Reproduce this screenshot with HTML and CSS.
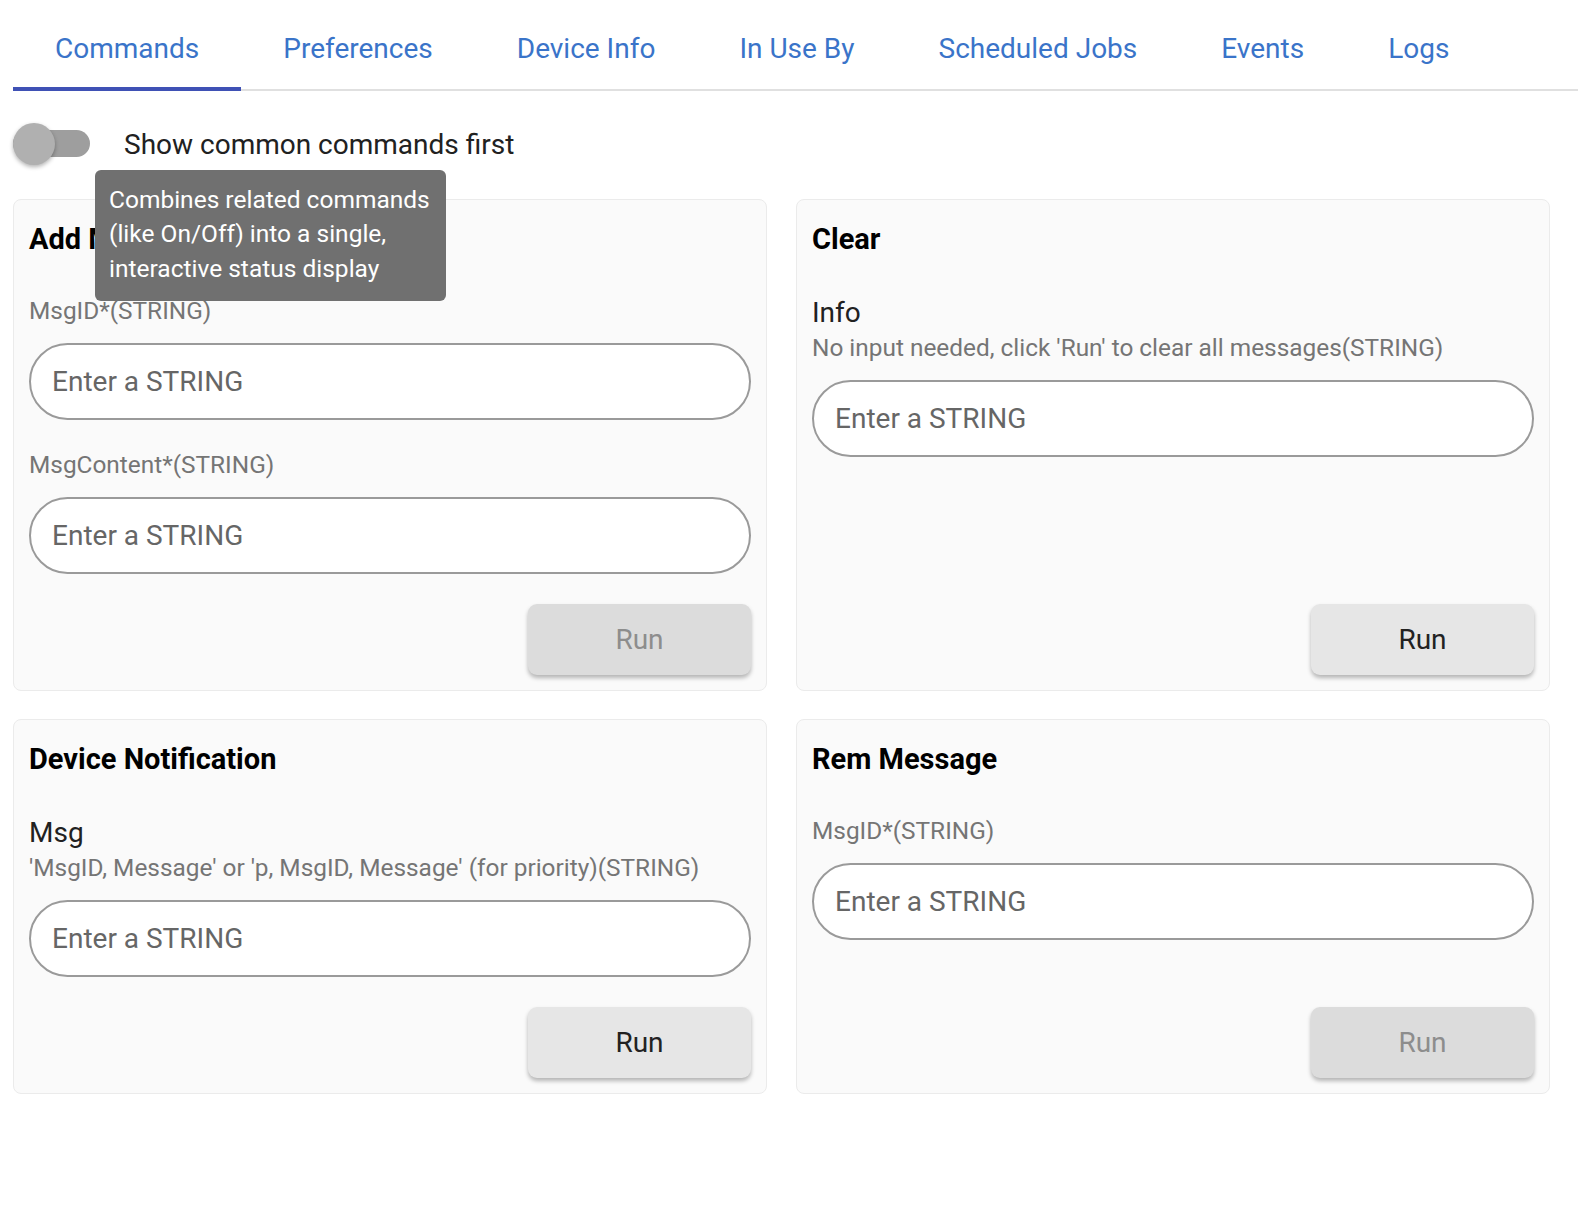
FILE: index.html
```html
<!DOCTYPE html>
<html>
<head>
<meta charset="utf-8">
<link rel="stylesheet" href="styles.css">
</head>
<body>
<div class="page">
  <nav class="tabs">
    <div class="tab active">Commands</div>
    <div class="tab">Preferences</div>
    <div class="tab">Device Info</div>
    <div class="tab">In Use By</div>
    <div class="tab">Scheduled Jobs</div>
    <div class="tab">Events</div>
    <div class="tab">Logs</div>
    <div class="tab-fill"></div>
  </nav>

  <div class="toggle-row">
    <div class="switch"><div class="track"></div><div class="thumb"></div></div>
    <span class="toggle-label">Show common commands first</span>
    <div class="tooltip">Combines related commands (like On/Off) into a single, interactive status display</div>
  </div>

  <div class="grid">
    <section class="card">
      <h3 class="card-title">Add Message</h3>
      <div class="field first">
        <div class="field-desc">MsgID*(STRING)</div>
        <div class="input">Enter a STRING</div>
      </div>
      <div class="field">
        <div class="field-desc">MsgContent*(STRING)</div>
        <div class="input">Enter a STRING</div>
      </div>
      <div class="actions"><button class="run disabled">Run</button></div>
    </section>

    <section class="card">
      <h3 class="card-title">Clear</h3>
      <div class="field first">
        <div class="field-name">Info</div>
        <div class="field-desc">No input needed, click 'Run' to clear all messages(STRING)</div>
        <div class="input">Enter a STRING</div>
      </div>
      <div class="actions"><button class="run">Run</button></div>
    </section>

    <section class="card">
      <h3 class="card-title">Device Notification</h3>
      <div class="field first">
        <div class="field-name">Msg</div>
        <div class="field-desc">'MsgID, Message' or 'p, MsgID, Message' (for priority)(STRING)</div>
        <div class="input">Enter a STRING</div>
      </div>
      <div class="actions"><button class="run">Run</button></div>
    </section>

    <section class="card">
      <h3 class="card-title">Rem Message</h3>
      <div class="field first">
        <div class="field-desc">MsgID*(STRING)</div>
        <div class="input">Enter a STRING</div>
      </div>
      <div class="actions"><button class="run disabled">Run</button></div>
    </section>
  </div>
</div>
</body>
</html>
```

FILE: styles.css
```css
* { box-sizing: border-box; }
html, body { margin: 0; padding: 0; background: #fff; }
body {
  font-family: Roboto, "Liberation Sans", Arial, sans-serif;
  color: #212121;
}
.page { padding: 0 0 0 13px; }

.tabs {
  display: flex;
  height: 91px;
}
.tab {
  padding: 8px 42px 0 42px;
  font-size: 28px;
  color: #3a74c9;
  display: flex;
  align-items: center;
  border-bottom: 2px solid #e0e0e0;
  position: relative;
}
.tab.active::after {
  content: "";
  position: absolute;
  left: 0; right: 0; bottom: -2px;
  height: 4px;
  background: #3f51b5;
}
.tab-fill { flex: 1; border-bottom: 2px solid #e0e0e0; }

.toggle-row {
  position: relative;
  display: flex;
  align-items: center;
  height: 108px;
  padding-bottom: 2px;
}
.switch {
  position: relative;
  width: 77px;
  height: 42px;
  margin-right: 34px;
}
.track {
  position: absolute;
  left: 0; right: 0; top: 7px;
  height: 27px;
  border-radius: 14px;
  background: #9e9e9e;
}
.thumb {
  position: absolute;
  left: 0; top: 0;
  width: 42px; height: 42px;
  border-radius: 50%;
  background: #b0b0b0;
  box-shadow: 0 2px 4px rgba(0,0,0,0.3);
}
.toggle-label { font-size: 28px; color: #212121; }
.tooltip {
  position: absolute;
  left: 82px;
  top: 79px;
  width: 351px;
  padding: 13px 14px 15px 14px;
  background: #707070;
  color: #fff;
  font-size: 24.5px;
  line-height: 34.3px;
  border-radius: 6px;
  z-index: 5;
}

.grid {
  display: grid;
  grid-template-columns: 754px 754px;
  column-gap: 29px;
  row-gap: 28px;
}
.card {
  background: #fafafa;
  border: 1px solid #ebebeb;
  border-radius: 8px;
  padding: 16px 15px 15px 15px;
  display: flex;
  flex-direction: column;
}
.card-title {
  margin: 0;
  font-size: 29px;
  font-weight: 700;
  line-height: 46px;
  color: #000;
}
.field { margin-top: 31px; }
.field.first { margin-top: 35px; }
.field-name {
  font-size: 28px;
  line-height: 32px;
  color: #212121;
}
.field-desc {
  font-size: 24.4px;
  line-height: 28px;
  color: #757575;
}
.field-name + .field-desc { margin-top: 5px; }
.input {
  margin-top: 18px;
  height: 77px;
  border: 2px solid #9a9a9a;
  border-radius: 39px;
  background: #fff;
  padding: 0 21px;
  display: flex;
  align-items: center;
  font-size: 28px;
  color: #666;
}
.actions {
  margin-top: auto;
  padding-top: 30px;
  display: flex;
  justify-content: flex-end;
}
.run {
  width: 223px;
  height: 71px;
  border: none;
  border-radius: 9px;
  background: #e6e6e6;
  color: #222;
  font-family: Roboto, "Liberation Sans", Arial, sans-serif;
  font-size: 28px;
  box-shadow: 0 3px 4px rgba(0,0,0,0.28);
}
.run.disabled { background: #dcdcdc; color: #8d8d8d; }
```
